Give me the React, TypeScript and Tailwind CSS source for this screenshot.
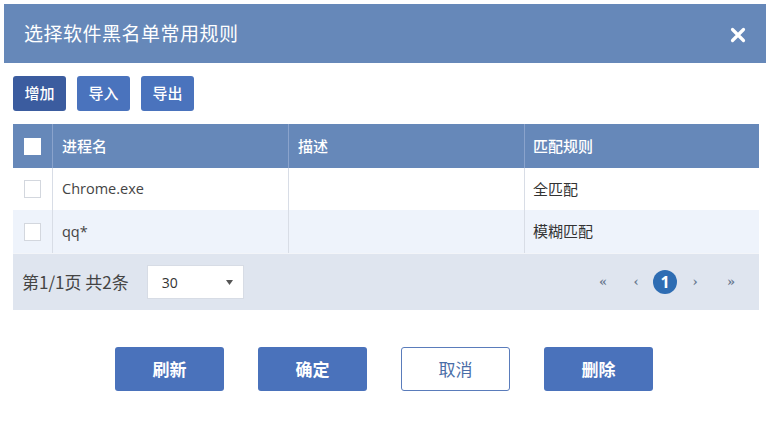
import React from "react";

const cjk = { fontFamily: '"Noto Sans CJK SC", "Noto Sans", sans-serif' };
const latin = { fontFamily: '"Open Sans", "Noto Sans CJK SC", sans-serif' };

function Check({ header }: { header?: boolean }) {
  return header ? (
    <div className="w-[17px] h-[17px] bg-white" />
  ) : (
    <div className="w-[17px] h-[18px] bg-white border border-[#d3d7de]" />
  );
}

export default function App() {
  return (
    <div className="w-[772px] h-[427px] bg-white relative" style={cjk}>
      <div className="pt-[4px] pl-[4px] pr-[6px]">
        <div className="h-[59px] bg-[#6688b9] flex items-center justify-between pl-[20px] pr-[20px]">
          <span className="text-white text-[19px] tracking-[0.5px]">选择软件黑名单常用规则</span>
          <svg width="16" height="16" viewBox="0 0 16 16" className="mt-[2px]">
            <path d="M2.5 2.5 L13.5 13.5 M13.5 2.5 L2.5 13.5" stroke="white" strokeWidth="3.2" strokeLinecap="round" />
          </svg>
        </div>
      </div>

      <div className="ml-[13px] w-[746px]">
        <div className="flex gap-[11px] mt-[13px] h-[35px]">
          <div className="w-[53px] h-[35px] rounded-[3px] bg-[#3b5c9f] text-white text-[15px] font-medium flex items-center justify-center">增加</div>
          <div className="w-[53px] h-[35px] rounded-[3px] bg-[#4a73bd] text-white text-[15px] font-medium flex items-center justify-center">导入</div>
          <div className="w-[53px] h-[35px] rounded-[3px] bg-[#4a73bd] text-white text-[15px] font-medium flex items-center justify-center">导出</div>
        </div>

        <div className="mt-[13px]">
          <div className="flex h-[44px] bg-[#6688b9] text-white text-[15px] font-medium">
            <div className="w-[40px] flex items-center justify-center border-r border-[#8aa3cc]"><Check header /></div>
            <div className="w-[236px] flex items-center pl-[9px] border-r border-[#8aa3cc]">进程名</div>
            <div className="w-[236px] flex items-center pl-[9px] border-r border-[#8aa3cc]">描述</div>
            <div className="flex-1 flex items-center pl-[8px]">匹配规则</div>
          </div>
          <div className="flex h-[42px] bg-white text-[15px] text-[#333]">
            <div className="w-[40px] flex items-center justify-center border-r border-[#d8dde6]"><Check /></div>
            <div className="w-[236px] flex items-center pl-[9px] border-r border-[#d8dde6] text-[14.5px] text-[#444]" style={latin}>Chrome.exe</div>
            <div className="w-[236px] border-r border-[#d8dde6]" />
            <div className="flex-1 flex items-center pl-[8px]">全匹配</div>
          </div>
          <div className="flex h-[43px] bg-[#eef3fb] text-[15px] text-[#333]">
            <div className="w-[40px] flex items-center justify-center border-r border-[#d8dde6]"><Check /></div>
            <div className="w-[236px] flex items-center pl-[9px] border-r border-[#d8dde6] text-[14.5px] text-[#444]" style={latin}>qq*</div>
            <div className="w-[236px] border-r border-[#d8dde6]" />
            <div className="flex-1 flex items-center pl-[8px]">模糊匹配</div>
          </div>
          <div className="flex items-center h-[57px] bg-[#dfe5ef] border-t border-[#f3f5f9] pl-[9px] pr-[20px]">
            <span className="text-[17px] text-[#444]">第1/1页 共2条</span>
            <div className="ml-[18px] w-[97px] h-[34px] bg-white border border-[#d7dce5] flex items-center justify-between pl-[14px] pr-[10px]">
              <span className="text-[14px] text-[#333]" style={latin}>30</span>
              <svg width="7" height="5" viewBox="0 0 7 5"><path d="M0 0 L7 0 L3.5 5 Z" fill="#555" /></svg>
            </div>
            <div className="flex-1" />
            <div className="flex items-center text-[#6a7a90] text-[13px] font-bold" style={{ fontFamily: '"DejaVu Serif", serif' }}>
              <span className="w-[16px] text-center">«</span>
              <span className="w-[16px] text-center ml-[17px]">‹</span>
              <span className="ml-[9px] w-[24px] h-[24px] rounded-full bg-[#2e6db3] text-white text-[16px] font-bold flex items-center justify-center" style={latin}>1</span>
              <span className="w-[16px] text-center ml-[10px]">›</span>
              <span className="w-[16px] text-center ml-[20px]">»</span>
            </div>
          </div>
        </div>
      </div>

      <div className="flex gap-[34px] pl-[115px] mt-[37px]">
        <div className="w-[109px] h-[44px] rounded-[3px] bg-[#4a72bb] text-white text-[17px] font-bold flex items-center justify-center">刷新</div>
        <div className="w-[109px] h-[44px] rounded-[3px] bg-[#4a72bb] text-white text-[17px] font-bold flex items-center justify-center">确定</div>
        <div className="w-[109px] h-[44px] rounded-[3px] bg-white border border-[#5a7cbb] text-[#4a6ea8] text-[17px] flex items-center justify-center">取消</div>
        <div className="w-[109px] h-[44px] rounded-[3px] bg-[#4a72bb] text-white text-[17px] font-bold flex items-center justify-center">删除</div>
      </div>
    </div>
  );
}
